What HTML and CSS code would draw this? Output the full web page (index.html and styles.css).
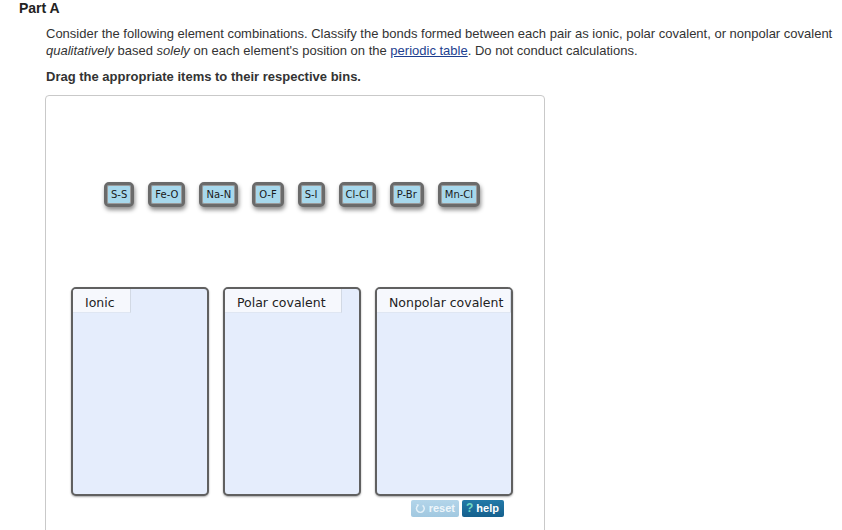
FILE: index.html
```html
<!DOCTYPE html>
<html lang="en">
<head>
  <meta charset="UTF-8" />
  <title>Part A</title>
  <link rel="stylesheet" href="styles.css">
</head>
<body>

<!-- title of the part -->
<h2 class="part-title">Part A</h2>

<div class="question">
  <p class="intro">Consider the following element combinations. Classify the bonds formed between each pair as ionic, polar covalent, or nonpolar covalent <em>qualitatively</em> based <em>solely</em> on each element's position on the <a href="#">periodic table</a>. Do not conduct calculations.</p>
  <p class="task">Drag the appropriate items to their respective bins.</p>

  <!-- drag and drop area -->
  <div class="board">
    <div class="tiles">
      <span class="tile">S-S</span>
      <span class="tile">Fe-O</span>
      <span class="tile">Na-N</span>
      <span class="tile">O-F</span>
      <span class="tile">S-I</span>
      <span class="tile">Cl-Cl</span>
      <span class="tile">P-Br</span>
      <span class="tile">Mn-Cl</span>
    </div>

    <div class="bins">
      <div class="bin"><span class="bin-label">Ionic</span></div>
      <div class="bin"><span class="bin-label">Polar covalent</span></div>
      <div class="bin"><span class="bin-label">Nonpolar covalent</span></div>
    </div>

    <div class="controls">
      <button class="btn reset">
        <svg width="11" height="11" viewBox="0 0 11 11"><path d="M3.2 2.2 A4 4 0 1 0 7.8 2.2" fill="none" stroke="#e4f1f9" stroke-width="1.5"/><path d="M1.6 0.8 L4.4 1.6 L2.6 3.8 Z" fill="#e4f1f9"/></svg>
        reset
      </button>
      <button class="btn help"><span class="q">?</span> help</button>
    </div>
  </div>
</div>

</body>
</html>
```

FILE: styles.css
```css
body {
  font-family: "Liberation Sans", Arial, sans-serif;
  background: #fff;
  color: #222;
  margin: 0;
}
.part-title {
  font-size: 14px;
  line-height: 16px;
  margin: 0;
  padding-left: 19px;
}
.question {
  padding-left: 46px;
}
.intro {
  font-size: 13px;
  line-height: 16.5px;
  margin: 10px 0 0;
  color: #333;
  width: 792px;
}
.intro a {
  color: #1d3f8f;
}
.task {
  font-size: 13px;
  font-weight: bold;
  line-height: 16.5px;
  margin: 10px 0 0;
  color: #333;
}
.board {
  margin: 9px 0 0 -1px;
  width: 498px;
  min-height: 460px;
  border: 1px solid #c9c9c9;
  border-radius: 4px;
}
.tiles {
  display: flex;
  gap: 14px;
  padding: 86px 0 0 58px;
}
.tile {
  font-family: "DejaVu Sans", Verdana, sans-serif;
  font-size: 10px;
  line-height: 19px;
  height: 19px;
  padding: 0 4px;
  color: #1a1a1a;
  background: #a7d8ec;
  border: 3px solid #6a6a6a;
  border-radius: 5px;
  box-shadow: inset 0 0 0 1px #9a9a9a, 1px 3px 4px rgba(0, 0, 0, 0.45);
}
.bins {
  display: flex;
  gap: 14px;
  margin-top: 80px;
  padding-left: 25px;
}
.bin {
  width: 134px;
  height: 205px;
  background: #e5edfc;
  border: 2px solid #606060;
  border-radius: 5px;
  box-shadow: 0 1px 2px rgba(0, 0, 0, 0.35);
  overflow: hidden;
}
.bin-label {
  display: inline-block;
  box-sizing: border-box;
  max-width: 100%;
  font-family: "DejaVu Sans", Verdana, sans-serif;
  font-size: 12.5px;
  line-height: 18px;
  padding: 5px 15px 0 12px;
  white-space: nowrap;
  color: #222;
  background: #f6f8fd;
  border-right: 1px solid #d2d9e4;
  border-bottom: 1px solid #dfe6f2;
}
.controls {
  display: flex;
  justify-content: flex-end;
  gap: 3px;
  margin-top: 4px;
  padding-right: 40px;
}
.btn {
  font-family: "Liberation Sans", Arial, sans-serif;
  font-size: 11px;
  font-weight: bold;
  height: 17px;
  padding: 0 4px;
  border: none;
  border-radius: 2px;
  color: #fff;
  display: flex;
  align-items: center;
  gap: 3px;
}
.reset {
  width: 48px;
  background: linear-gradient(#b3d5ea, #a1c8e0);
  color: #eef6fb;
}
.help {
  width: 42px;
  background: linear-gradient(#2379a8, #15608d);
}
.help .q {
  color: #6fd8c4;
  font-size: 12px;
}
```
